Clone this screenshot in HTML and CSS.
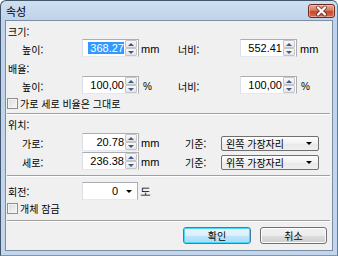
FILE: index.html
```html
<!DOCTYPE html>
<html lang="ko">
<head>
<meta charset="utf-8">
<link rel="stylesheet" href="styles.css">
</head>
<body>
<div class="window">
  <div class="titlebar">
    <span class="title">속성</span>
    <span class="close">
      <svg width="25" height="12" viewBox="0 0 25 12">
        <path d="M9 2.5 L16 9.5 M16 2.5 L9 9.5" stroke="#4a1a12" stroke-width="4" stroke-linecap="round" opacity="0.6" fill="none"/>
        <path d="M9 2.5 L16 9.5 M16 2.5 L9 9.5" stroke="#ffffff" stroke-width="2.2" stroke-linecap="round" fill="none"/>
      </svg>
    </span>
  </div>
  <div class="content">
    <div class="gtitle gt-size">크기:</div>
    <div class="row">
      <span class="lbl">높이:</span>
      <div class="spin"><div class="box"><span class="sel">368.27</span></div><div class="btns"><span class="sb"><i class="up"></i></span><span class="sb"><i class="dn"></i></span></div></div>
      <span class="unit">mm</span>
      <span class="lbl2">너비:</span>
      <div class="spin"><div class="box">552.41</div><div class="btns"><span class="sb"><i class="up"></i></span><span class="sb"><i class="dn"></i></span></div></div>
      <span class="unit2">mm</span>
    </div>

    <div class="gtitle gt-scale">배율:</div>
    <div class="row">
      <span class="lbl">높이:</span>
      <div class="spin"><div class="box">100,00</div><div class="btns"><span class="sb"><i class="up"></i></span><span class="sb"><i class="dn"></i></span></div></div>
      <span class="unit pct">%</span>
      <span class="lbl2">너비:</span>
      <div class="spin"><div class="box">100,00</div><div class="btns"><span class="sb"><i class="up"></i></span><span class="sb"><i class="dn"></i></span></div></div>
      <span class="unit2 pct">%</span>
    </div>
    <div class="check check-ratio"><span class="cb"></span><span>가로 세로 비율은 그대로</span></div>

    <div class="sep sep1"></div>

    <div class="gtitle gt-pos">위치:</div>
    <div class="row row-pos1">
      <span class="lbl">가로:</span>
      <div class="spin"><div class="box">20.78</div><div class="btns"><span class="sb"><i class="up"></i></span><span class="sb"><i class="dn"></i></span></div></div>
      <span class="unit unit-wide">mm</span>
      <span class="lbl3">기준:</span>
      <div class="combo"><span>왼쪽 가장자리</span><i class="dd"></i></div>
    </div>
    <div class="row row-pos2">
      <span class="lbl">세로:</span>
      <div class="spin"><div class="box">236.38</div><div class="btns"><span class="sb"><i class="up"></i></span><span class="sb"><i class="dn"></i></span></div></div>
      <span class="unit unit-wide">mm</span>
      <span class="lbl3">기준:</span>
      <div class="combo"><span>위쪽 가장자리</span><i class="dd"></i></div>
    </div>

    <div class="sep sep2"></div>

    <div class="row row-rot">
      <span class="lbl-rot">회전:</span>
      <div class="rotbox"><span class="rotval">0</span><i class="dd"></i></div>
      <span class="unit">도</span>
    </div>
    <div class="check check-lock"><span class="cb"></span><span>개체 잠금</span></div>

    <div class="sep sep3"></div>

    <div class="buttons">
      <button class="btn btn-default">확인</button>
      <button class="btn">취소</button>
    </div>
  </div>
</div>
</body>
</html>
```

FILE: styles.css
```css
* { box-sizing: border-box; }
html, body { margin: 0; padding: 0; }
body {
  width: 338px;
  height: 256px;
  overflow: hidden;
  font-family: "Noto Sans CJK KR", "Liberation Sans", sans-serif;
  font-size: 10px;
  color: #000;
  background: #fff;
}
.window {
  width: 338px;
  height: 256px;
  display: flex;
  flex-direction: column;
  border: 1px solid #41576d;
  border-bottom-color: #2bb9cc;
  border-right-color: #3c8fa8;
  border-radius: 6px 6px 0 0;
  background: linear-gradient(to bottom, #cfdff0 0, #bfd3ea 19px, #c3d6ec 100%);
  padding: 0 4px 4px 4px;
}
.titlebar {
  height: 19px;
  display: flex;
  align-items: center;
  justify-content: space-between;
  padding-left: 1px;
}
.title {
  font-size: 11px;
  line-height: 14px;
  color: #000;
}
.close {
  width: 27px;
  height: 14px;
  margin-right: -2px;
  margin-top: 1px;
  border: 1px solid #6e2a20;
  border-radius: 3px;
  background: linear-gradient(to bottom, #e9a897 0, #d97a62 45%, #c7482a 50%, #d2694d 100%);
  display: flex;
  align-items: center;
  justify-content: center;
  box-shadow: inset 0 0 0 1px rgba(255, 220, 210, 0.5);
}
.close svg { display: block; }
.content {
  flex: 1;
  background: #f0f0f0;
  border: 1px solid #7b8ea3;
  display: flex;
  flex-direction: column;
}
.gtitle {
  height: 14px;
  line-height: 14px;
  padding-left: 2px;
}
.gt-size { margin-top: 4px; }
.gt-scale { margin-top: 5px; }
.gt-pos { margin-top: 3px; }
.row {
  display: flex;
  align-items: center;
  height: 18px;
  padding-left: 16px;
}
.row-pos1 { margin-top: 1px; }
.row-pos2 { margin-top: 1px; }
.lbl { width: 60px; padding-top: 3px; }
.lbl2 { width: 62px; padding-top: 3px; }
.lbl3 { width: 36px; padding-top: 2px; }
.lbl-rot { width: 74px; }
.row-rot { padding-left: 2px; margin-top: 5px; }
.unit { width: 39px; padding-left: 2px; font-family: "Liberation Sans", sans-serif; font-size: 11px; padding-top: 1px; }
.unit-wide { width: 46px; }
.unit2 { padding-left: 3px; font-family: "Liberation Sans", sans-serif; font-size: 11px; padding-top: 1px; }
.pct { padding-left: 4px; font-size: 10px; padding-top: 3px; }
.spin {
  width: 57px;
  height: 18px;
  display: flex;
}
.box {
  flex: 1;
  height: 18px;
  background: #fff;
  border: 1px solid #abadb3;
  border-left-color: #dbdfe6;
  border-bottom-color: #e3e9ef;
  border-right: none;
  text-align: right;
  font-family: "Liberation Sans", sans-serif;
  font-size: 11px;
  line-height: 16px;
  padding-right: 1px;
}
.sel {
  display: inline-block;
  background: #3399ff;
  color: #fff;
  line-height: 12px;
  padding-left: 2px;
}
.btns {
  width: 14px;
  height: 18px;
  display: flex;
  flex-direction: column;
  background: #fff;
  border: 1px solid #abadb3;
  border-left: none;
  border-bottom-color: #e3e9ef;
  padding: 0 1px 0 0;
}
.sb {
  flex: 1;
  border: 1px solid #c5c5c5;
  border-radius: 1px;
  background: linear-gradient(to bottom, #f8f8f8, #e6e6e6);
  display: flex;
  align-items: center;
  justify-content: center;
}
.up {
  width: 0; height: 0;
  border-left: 3px solid transparent;
  border-right: 3px solid transparent;
  border-bottom: 3px solid #3d5a8a;
}
.dn {
  width: 0; height: 0;
  border-left: 3px solid transparent;
  border-right: 3px solid transparent;
  border-top: 3px solid #3d5a8a;
}
.check {
  display: flex;
  align-items: center;
  height: 14px;
  padding-left: 1px;
  gap: 2px;
}
.check-ratio { margin-top: 2px; }
.check-lock { margin-top: 1px; }
.cb {
  width: 11px;
  height: 11px;
  border: 1px solid #8e8f8f;
  background: linear-gradient(135deg, #dcdcdc, #f7f7f7);
  box-shadow: inset 0 0 0 1px #f4f4f4;
}
.sep {
  height: 2px;
  border-top: 1px solid #a0a0a0;
  border-bottom: 1px solid #ffffff;
  margin-left: 1px;
  margin-right: 2px;
}
.sep1 { margin-top: 3px; }
.sep2 { margin-top: 5px; }
.sep3 { margin-top: 5px; }
.combo {
  width: 98px;
  height: 15px;
  margin-top: 2px;
  border: 1px solid #707070;
  border-radius: 2px;
  background: linear-gradient(to bottom, #fdfdfd, #f1f1f1 50%, #e8e8e8 51%, #efefef);
  display: flex;
  align-items: center;
  justify-content: space-between;
  padding: 0 6px 0 4px;
  line-height: 13px;
}
.dd {
  width: 0; height: 0;
  border-left: 3px solid transparent;
  border-right: 3px solid transparent;
  border-top: 3px solid #000;
}
.rotbox {
  width: 56px;
  height: 18px;
  background: #fff;
  border: 1px solid #abadb3;
  border-left-color: #dbdfe6;
  border-bottom-color: #e3e9ef;
  display: flex;
  align-items: center;
  justify-content: flex-end;
  padding-right: 5px;
  gap: 8px;
}
.rotval {
  font-family: "Liberation Sans", sans-serif;
  font-size: 11px;
}
.buttons {
  display: flex;
  justify-content: flex-end;
  gap: 9px;
  padding-right: 5px;
  margin-top: 5px;
}
.btn {
  width: 68px;
  height: 17px;
  margin: 0;
  padding: 0;
  font-family: "Noto Sans CJK KR", sans-serif;
  font-size: 10px;
  line-height: 13px;
  color: #000;
  border: 1px solid #707070;
  border-radius: 3px;
  background: linear-gradient(to bottom, #f2f2f2 0, #ebebeb 50%, #dddddd 51%, #cfcfcf 100%);
  box-shadow: inset 0 0 0 1px #fcfcfc;
}
.btn + .btn { width: 67px; }
.btn-default {
  border-color: #3c7fb1;
  background: linear-gradient(to bottom, #eaf6fd 0, #d9f0fc 50%, #bee6fd 51%, #a7d9f5 100%);
  box-shadow: inset 0 0 0 1px #48d8fb;
}
```
